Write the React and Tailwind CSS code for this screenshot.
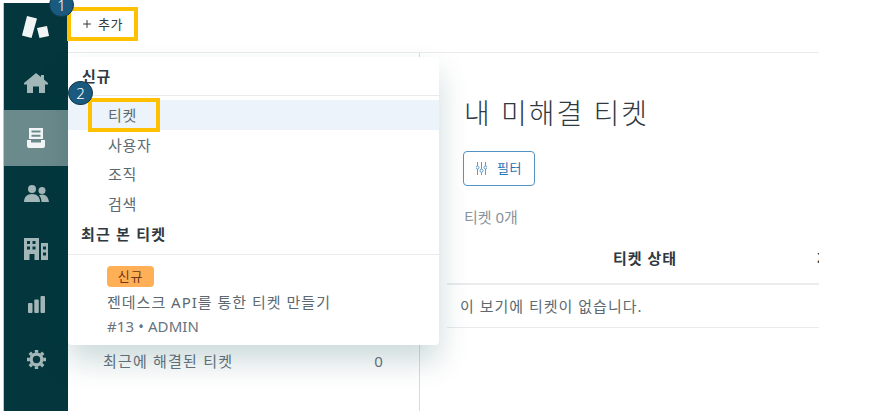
import React from 'react';
import { Plus } from 'lucide-react';

function Logo() {
    return (
        <svg width="28" height="22" viewBox="22 16 28 22" fill="#f2f5f5">
            <path d="M27 16 L37 18.500 L31.500 38 L22 35.500 Z" />
            <path d="M37 28 L47 26 L49 36 L39.500 38 Z" />
        </svg>
    );
}

function HomeIcon() {
    return (
        <svg width="24" height="20" viewBox="0 0 24 20" fill="#a3b7b8">
            <path d="M12 0 L17 4 V2 H20 V6.500 L24 10 V11.500 H21 V20 H15 V13.500 H9 V20 H3 V11.500 H0 V10 Z" />
        </svg>
    );
}

function TicketsIcon() {
    return (
        <svg width="18" height="20" viewBox="0 0 18 20" fill="#f2f5f5">
            <path fillRule="evenodd" d="M2 0h14v11H2z M4.500 2.500v2h9v-2z M4.500 6.800v2h9v-2z" />
            <path d="M0 12h4v2.500h10V12h4v6a2 2 0 0 1-2 2H2a2 2 0 0 1-2-2z" />
        </svg>
    );
}

function PeopleIcon() {
    return (
        <svg width="25" height="17" viewBox="0 0 25 17" fill="#a3b7b8">
            <circle cx="8" cy="4" r="4" />
            <circle cx="18" cy="5.500" r="3.500" />
            <path d="M0 17c0-5 3-8 8-8s8 3 8 8z" />
            <path d="M17.500 17c0-3-1-5.300-2.500-6.500 1-.8 2-1 3-1 4 0 6.500 3 7 7.500z" />
        </svg>
    );
}

function OrgIcon() {
    return (
        <svg width="24" height="22" viewBox="0 0 24 22" fill="#a3b7b8">
            <path fillRule="evenodd" d="M0 0h15v22H10.500v-6h-5v6H0z M3 3v3h3V3z M8.500 3v3h3V3z M3 8.500v3h3v-3z M8.500 8.500v3h3v-3z" />
            <path fillRule="evenodd" d="M17 5h7v17h-7z M19 8.500v3h3v-3z M19 14.500v3h3v-3z" />
        </svg>
    );
}

function ChartIcon() {
    return (
        <svg width="17" height="17" viewBox="0 0 17 17" fill="#a3b7b8">
            <rect x="0" y="7" width="4.500" height="10" rx="1" />
            <rect x="6.300" y="3.500" width="4.500" height="13.500" rx="1" />
            <rect x="12.500" y="0" width="4.500" height="17" rx="1" />
        </svg>
    );
}

function GearIcon() {
    return (
        <svg width="19" height="19" viewBox="0 0 20 20">
            <circle cx="10" cy="10" r="5.600" fill="none" stroke="#a3b7b8" strokeWidth="3.400" />
            <path stroke="#a3b7b8" strokeWidth="3.600" d="M10 0v3M10 17v3M0 10h3M17 10h3M2.900 2.900l2.100 2.100M15 15l2.100 2.100M2.900 17.100L5 15M15 5l2.100-2.100" />
        </svg>
    );
}

function FilterIcon() {
    return (
        <svg width="11" height="13" viewBox="0 0 11 13" fill="none" stroke="#5a9bd0" strokeWidth="1">
            <path d="M1.500 0v4M1.500 7v6M5.500 0v7M5.500 10.500V13M9.500 0v4M9.500 7v6" />
            <circle cx="1.500" cy="5.500" r="1.500" />
            <circle cx="5.500" cy="8.700" r="1.500" />
            <circle cx="9.500" cy="5.500" r="1.500" />
        </svg>
    );
}

function Badge({ n, className }) {
    return (
        <div className={`absolute w-[25px] h-[24px] rounded-full bg-[#1a5a7e] border border-[#12394c] text-white text-[15px] font-light flex items-center justify-center ${className}`}>
            {n}
        </div>
    );
}

function App() {
    return (
        <div className="relative w-[871px] h-[411px] overflow-hidden bg-white flex font-['Noto_Sans','Noto_Sans_CJK_KR',sans-serif] text-[#5c6970]">
            <div className="w-[4px] shrink-0 flex justify-end pt-[3px]">
                <div className="w-px h-full bg-[#c4c4c4]"></div>
            </div>
            <aside className="w-[64px] shrink-0 mt-[3px] bg-[#03363d] flex flex-col items-center">
                <div className="h-[47px] flex items-center justify-center"><Logo /></div>
                <div className="h-[60px] w-full pt-[5px] flex items-center justify-center"><HomeIcon /></div>
                <div className="h-[56px] w-full bg-[#6b8a8c] flex items-center justify-center"><TicketsIcon /></div>
                <div className="h-[55px] w-full flex items-center justify-center"><PeopleIcon /></div>
                <div className="h-[56px] w-full flex items-center justify-center"><OrgIcon /></div>
                <div className="h-[55px] w-full flex items-center justify-center"><ChartIcon /></div>
                <div className="h-[55px] w-full flex items-center justify-center"><GearIcon /></div>
            </aside>

            <div className="w-[751px] shrink-0 flex flex-col">
                <header className="h-[53px] shrink-0 border-b border-[#e9ebed] flex items-start pl-[13px] pt-[15px] text-[13px] tracking-[0.5px] text-[#2f3941]">
                    <Plus size={12} strokeWidth={2} className="mt-[3px] mr-[5px]" />
                    <span className="leading-[18px]">추가</span>
                </header>
                <div className="flex-1 flex min-h-0">
                    <div className="w-[352px] shrink-0 border-r border-[#d8dcde] flex items-end justify-between pl-[35px] pr-[35px] pb-[39px] text-[15px] tracking-[1.200px] text-[#68737d]">
                        <span>최근에 해결된 티켓</span>
                        <span>0</span>
                    </div>
                    <main className="flex-1 min-w-0 pl-[27px] flex flex-col overflow-hidden">
                        <h1 className="text-[28px] font-light tracking-[2px] leading-[36px] text-[#2f3941] mt-[42px] pl-[17px]">내 미해결 티켓</h1>
                        <div className="pl-[16px] mt-[20px]">
                            <button className="w-[72px] h-[35px] border border-[#5293c7] rounded-[4px] flex items-center justify-center gap-[10px] text-[13px] tracking-[0.5px] text-[#1f73b7]">
                                <FilterIcon />
                                필터
                            </button>
                        </div>
                        <div className="pl-[17px] mt-[21px] text-[15px] leading-[20px] text-[#87929d]">티켓 0개</div>
                        <div className="mt-[14px] h-[44px] border-b-2 border-[#e9ebed] relative text-[15px] tracking-[1px] font-bold text-[#2f3941] whitespace-nowrap">
                            <span className="absolute left-[166px] top-[6px]">티켓 상태</span>
                            <span className="absolute left-[370px] top-[6px]">제목</span>
                        </div>
                        <div className="h-[43px] border-b border-[#e9ebed] flex items-center pl-[13px] text-[15px] tracking-[1px]">이 보기에 티켓이 없습니다.</div>
                    </main>
                </div>
            </div>

            {/* 추가 menu */}
            <div className="absolute left-[68px] top-[57px] w-[371px] h-[288px] bg-white rounded-[4px] shadow-[0_16px_30px_rgba(4,68,77,0.2)] text-[15px] tracking-[0.7px]">
                <div className="h-[39px] border-b border-[#e9ebed] pl-[14px] pt-[8px] font-bold text-[#2f3941] leading-[22px]">신규</div>
                <div className="mt-[4px] h-[30px] bg-[#edf3fa] pl-[40px] leading-[30px]">티켓</div>
                <div className="h-[30px] pl-[40px] leading-[30px]">사용자</div>
                <div className="h-[29px] pl-[40px] leading-[29px]">조직</div>
                <div className="h-[30px] pl-[40px] leading-[30px]">검색</div>
                <div className="h-[36px] border-b border-[#e9ebed] pl-[13px] pt-[4px] font-bold text-[#2f3941] leading-[22px] tracking-[1.200px]">최근 본 티켓</div>
                <div className="pl-[39px] pt-[11px]">
                    <span className="block w-[47px] h-[21px] rounded-[4px] bg-[#ffb057] text-[#703815] text-[13px] leading-[21px] text-center">신규</span>
                    <div className="mt-[4px] leading-[22px] tracking-[1px]">젠데스크 API를 통한 티켓 만들기</div>
                    <div className="mt-[2px] leading-[22px] tracking-[0.1px] text-[#68737d]">#13 • ADMIN</div>
                </div>
            </div>

            {/* callouts */}
            <div className="absolute left-[67px] top-[7px] w-[71px] h-[34px] border-[4px] border-[#ffc000]"></div>
            <div className="absolute left-[88px] top-[98px] w-[72px] h-[34px] border-[4px] border-[#ffc000]"></div>
            <Badge n="1" className="left-[49px] top-[-7px]" />
            <Badge n="2" className="left-[68px] top-[81px]" />
        </div>
    );
}

export default App;
